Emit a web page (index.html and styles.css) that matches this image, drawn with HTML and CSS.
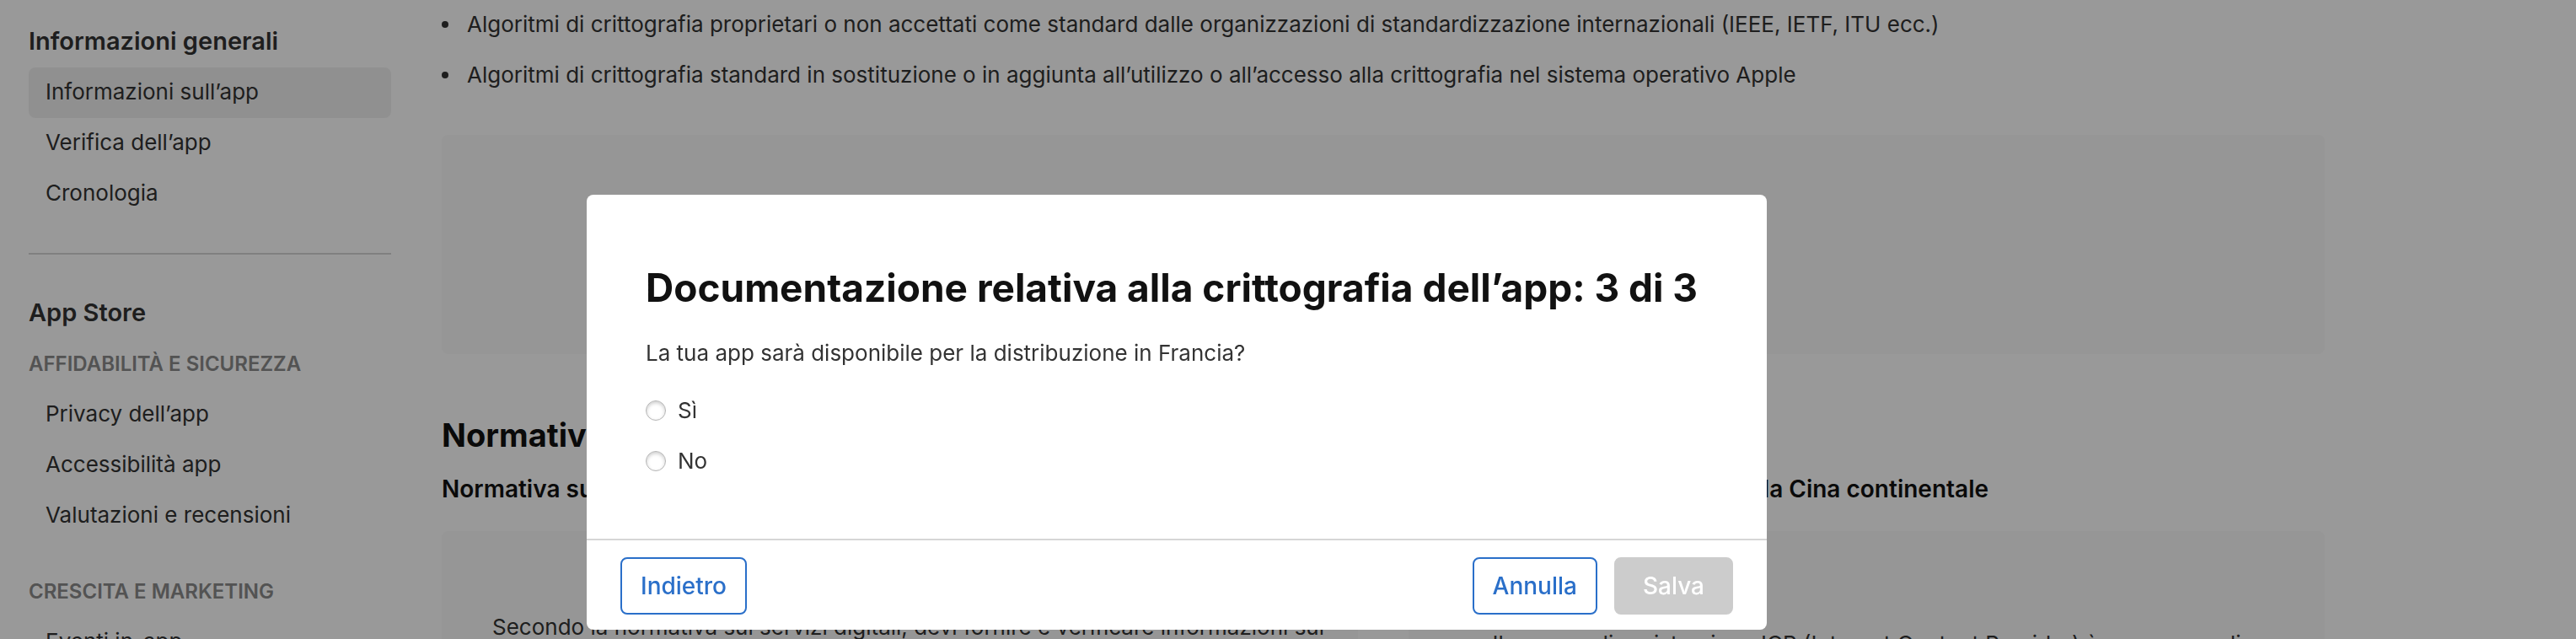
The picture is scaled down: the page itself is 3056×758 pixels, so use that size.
FILE: index.html
```html
<!DOCTYPE html>
<html lang="it">
<head>
<meta charset="utf-8">
<title>Informazioni sull’app</title>
<link rel="stylesheet" href="styles.css">
</head>
<body>
<div class="page">
  <nav class="sidebar" aria-label="Sezioni">
    <h2 class="nav-title">Informazioni generali</h2>
    <a class="nav-link nav-link-active" href="#info">Informazioni sull’app</a>
    <a class="nav-link" href="#verifica">Verifica dell’app</a>
    <a class="nav-link" href="#cronologia">Cronologia</a>
    <hr class="nav-rule">
    <h2 class="nav-title">App Store</h2>
    <h3 class="nav-group">AFFIDABILITÀ E SICUREZZA</h3>
    <a class="nav-link" href="#privacy">Privacy dell’app</a>
    <a class="nav-link" href="#accessibilita">Accessibilità app</a>
    <a class="nav-link" href="#valutazioni">Valutazioni e recensioni</a>
    <h3 class="nav-group nav-group-next">CRESCITA E MARKETING</h3>
    <a class="nav-link" href="#eventi">Eventi in-app</a>
  </nav>
  <main class="content">
    <ul class="bullets">
      <li>Algoritmi di crittografia proprietari o non accettati come standard dalle organizzazioni di standardizzazione internazionali (IEEE, IETF, ITU ecc.)</li>
      <li>Algoritmi di crittografia standard in sostituzione o in aggiunta all’utilizzo o all’accesso alla crittografia nel sistema operativo Apple</li>
    </ul>
    <div class="panel"></div>
    <h2 class="section-title">Normative</h2>
    <div class="columns">
      <section class="column">
        <h3 class="column-title">Normativa sui servizi digitali</h3>
        <div class="card"><p>Secondo la normativa sui servizi digitali, devi fornire e verificare informazioni sul</p></div>
      </section>
      <section class="column">
        <h3 class="column-title">Disponibilità nell’App Store per la Cina continentale</h3>
        <div class="card card-centered"><p>Il numero di registrazione ICP (Internet Content Provider) è un numero di</p></div>
      </section>
    </div>
  </main>
</div>
<div class="overlay">
  <form class="modal" role="dialog" aria-modal="true" aria-labelledby="modal-title">
    <div class="modal-body">
      <h1 class="modal-title" id="modal-title">Documentazione relativa alla crittografia dell’app: 3 di 3</h1>
      <fieldset class="question">
        <legend>La tua app sarà disponibile per la distribuzione in Francia?</legend>
        <label class="option"><input class="radio" type="radio" name="francia" value="si">Sì</label>
        <label class="option"><input class="radio" type="radio" name="francia" value="no">No</label>
      </fieldset>
    </div>
    <footer class="modal-footer">
      <button class="button" type="button">Indietro</button>
      <div class="actions">
        <button class="button" type="button">Annulla</button>
        <button class="button button-save" type="submit" disabled>Salva</button>
      </div>
    </footer>
  </form>
</div>
</body>
</html>
```
FILE: styles.css
```css
* { box-sizing: border-box; }
html, body { height: 100%; }
body {
  margin: 0;
  overflow: hidden;
  background: #fff;
  color: #333;
  font-family: Inter, "Liberation Sans", sans-serif;
  font-size: 26px;
  line-height: 32px;
}
h1, h2, h3, p, ul { margin: 0; font-weight: 600; }
p, ul { font-weight: 400; }
.page {
  display: grid;
  grid-template-columns: 430px minmax(0, 1fr);
  gap: 60px;
  padding: 0 298px 0 34px;
  height: 100vh;
  overflow: hidden;
}
.sidebar { padding-top: 20px; display: flex; flex-direction: column; }
.nav-title { padding-bottom: 2px; font-size: 29px; line-height: 58px; }
.nav-link {
  padding: 0 20px 2px;
  line-height: 58px;
  border-radius: 8px;
  color: inherit;
  text-decoration: none;
}
.nav-link-active { background: #f1f1f1; }
.nav-rule { width: 100%; margin: 40px 0; border: 0; border-top: 2px solid #d6d6d6; }
.nav-group { font-size: 24px; line-height: 60px; color: #8a8a8a; }
.nav-group-next { margin-top: 30px; }
.bullets { padding: 0; list-style: none; }
.bullets li {
  display: flex;
  gap: 22px;
  padding-bottom: 2px;
  line-height: 58px;
  white-space: nowrap;
}
.bullets li::before {
  content: "";
  width: 8px;
  height: 8px;
  border-radius: 50%;
  background: #333;
  align-self: center;
}
.panel { margin-top: 40px; height: 260px; border-radius: 8px; background: #fafafa; }
.section-title { margin-top: 70px; font-size: 38px; font-weight: 700; line-height: 52px; color: #111; }
.columns { display: grid; grid-template-columns: 1fr 1fr; gap: 60px; }
.column-title { padding-bottom: 12px; font-size: 28px; line-height: 76px; color: #111; }
.card {
  min-height: 300px;
  padding: 98px 0 0 60px;
  border-radius: 8px;
  background: #fafafa;
}
.card-centered { padding: 118px 60px 0; text-align: center; }
.overlay {
  position: fixed;
  inset: 0;
  display: flex;
  justify-content: center;
  align-items: flex-start;
  padding: 231px 264px 0 0;
  background: rgba(0, 0, 0, 0.4);
}
.modal { width: 1400px; border-radius: 8px; background: #fff; overflow: hidden; }
.modal-body { padding: 80px 70px 62px; }
.modal-title { font-size: 46px; font-weight: 700; line-height: 60px; color: #111; white-space: nowrap; }
.question { margin: 0; padding: 0; border: 0; }
.question legend { padding: 32px 0 22px; }
.option { display: flex; align-items: center; gap: 14px; line-height: 60px; }
.radio {
  appearance: none;
  width: 24px;
  height: 24px;
  margin: 0;
  border: 1px solid #b4b4b4;
  border-radius: 50%;
  box-shadow: inset 0 2px 4px rgba(0, 0, 0, 0.2);
}
.modal-footer {
  display: flex;
  justify-content: space-between;
  padding: 20px 40px 18px;
  border-top: 2px solid #d6d6d6;
}
.actions { display: flex; gap: 20px; }
.button {
  height: 68px;
  padding: 0 22px;
  border: 2px solid #2a6fc9;
  border-radius: 8px;
  background: #fff;
  color: #2a6fc9;
  font: 500 28px/32px Inter, "Liberation Sans", sans-serif;
}
.button-save { padding: 0 32px; border-color: #ccc; background: #ccc; color: #fff; }
```
